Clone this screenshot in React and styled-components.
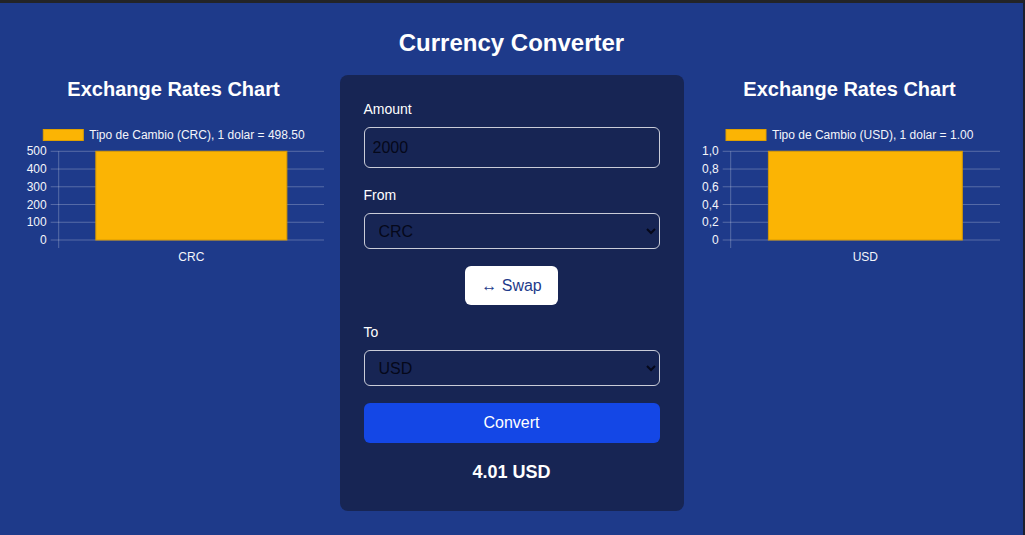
import React from "react";
import styled, { createGlobalStyle } from "styled-components";

const GlobalStyle = createGlobalStyle`
  body {
    margin: 0;
    background-color: #1e3a8a;
    font-family: "Liberation Sans", Arial, sans-serif;
    color: #ffffff;
  }
`

const Page = styled.div`
  min-height: 100vh;
  box-sizing: border-box;
  border-top: 3px solid #232427;
  border-right: 2px solid #1b1f2e;
  padding-top: 26px;
`

const Title = styled.h1`
  margin: 0 0 18px;
  font-size: 24px;
  line-height: 28px;
  font-weight: bold;
  text-align: center;
`

const Row = styled.div`
  display: flex;
  justify-content: center;
  align-items: flex-start;
  gap: 16px;
`

const ChartColumn = styled.section`
  width: 300px;
  display: flex;
  flex-direction: column;
  align-items: center;
`

const ChartTitle = styled.h2`
  margin: 1px 0 17px;
  font-size: 20px;
  line-height: 26px;
  font-weight: bold;
`

const ChartSvg = styled.svg`
  display: block;
  overflow: visible;
  font-family: "Liberation Sans", Arial, sans-serif;
  font-size: 12px;
  fill: #f4f5fa;
`

const Card = styled.div`
  width: 344px;
  box-sizing: border-box;
  padding: 24px 24px 25px;
  background-color: #172554;
  border-radius: 8px;
  display: flex;
  flex-direction: column;
`

const Label = styled.label`
  display: block;
  font-size: 14px;
  line-height: 20px;
  margin-top: ${props => props.$gap || "17px"};
  margin-bottom: 8px;
`

const Input = styled.input`
  box-sizing: border-box;
  width: 100%;
  height: 41px;
  padding: 0 8px;
  font-family: "Liberation Sans", Arial, sans-serif;
  font-size: 16px;
  color: #05081a;
  background: transparent;
  border: 1px solid #c9ccd8;
  border-radius: 6px;
  outline: none;
`

const Select = styled.select`
  box-sizing: border-box;
  width: 100%;
  height: 36px;
  padding: 0 10px;
  font-family: "Liberation Sans", Arial, sans-serif;
  font-size: 16px;
  color: #05081a;
  background: transparent;
  border: 1px solid #c9ccd8;
  border-radius: 6px;
`

const SwapRow = styled.div`
  display: flex;
  justify-content: center;
  margin-top: 17px;
`

const SwapButton = styled.button`
  height: 39px;
  padding: 0 16px;
  font-family: "Liberation Sans", Arial, sans-serif;
  font-size: 16px;
  color: #1e3a8a;
  background: #ffffff;
  border: none;
  border-radius: 6px;
`

const ConvertButton = styled.button`
  margin-top: 17px;
  width: 100%;
  height: 40px;
  font-family: "Liberation Sans", Arial, sans-serif;
  font-size: 16px;
  color: #ffffff;
  background: #1447e6;
  border: none;
  border-radius: 6px;
`

const Result = styled.div`
  margin-top: 15px;
  font-size: 18px;
  line-height: 28px;
  font-weight: bold;
  text-align: center;
`

const GRID = "rgba(255,255,255,0.25)"
const BAR = "#fbb404"

function BarChart({ legend, legendX, ticks, axisX, category }) {
  const top = 32.3
  const bottom = 121
  const step = (bottom - top) / (ticks.length - 1)
  const plotW = 300 - axisX
  const barW = plotW * 0.72
  const center = axisX + plotW / 2
  return (
    <ChartSvg width="300" height="150" viewBox="0 0 300 150">
      <rect x={legendX} y="10.5" width="40" height="11" fill={BAR} stroke="#e0a000" strokeWidth="1" />
      <text x={legendX + 46} y="20">{legend}</text>
      {ticks.map((t, i) => {
        const y = top + i * step
        return (
          <g key={t}>
            <line x1={axisX - 8} x2="300" y1={y} y2={y} stroke={GRID} strokeWidth="1" />
            <text x={axisX - 12} y={y + 4} textAnchor="end">{t}</text>
          </g>
        )
      })}
      <line x1={axisX} x2={axisX} y1={top} y2={bottom + 8} stroke={GRID} strokeWidth="1" />
      <rect x={center - barW / 2} y={top} width={barW} height={bottom - top} fill={BAR} stroke="#d99a00" strokeWidth="1" />
      <text x={center} y="142" textAnchor="middle">{category}</text>
    </ChartSvg>
  )
}

function App() {
  return (
    <Page>
      <GlobalStyle />
      <Title>Currency Converter</Title>
      <Row>
        <ChartColumn>
          <ChartTitle>Exchange Rates Chart</ChartTitle>
          <BarChart
            legend="Tipo de Cambio (CRC), 1 dolar = 498.50"
            legendX={19.3}
            ticks={["500", "400", "300", "200", "100", "0"]}
            axisX={34.7}
            category="CRC"
          />
        </ChartColumn>
        <Card>
          <Label $gap="0">Amount</Label>
          <Input type="number" defaultValue="2000" />
          <Label>From</Label>
          <Select defaultValue="CRC">
            <option value="CRC">CRC</option>
            <option value="USD">USD</option>
            <option value="EUR">EUR</option>
          </Select>
          <SwapRow>
            <SwapButton>↔ Swap</SwapButton>
          </SwapRow>
          <Label>To</Label>
          <Select defaultValue="USD">
            <option value="CRC">CRC</option>
            <option value="USD">USD</option>
            <option value="EUR">EUR</option>
          </Select>
          <ConvertButton>Convert</ConvertButton>
          <Result>4.01 USD</Result>
        </Card>
        <ChartColumn>
          <ChartTitle>Exchange Rates Chart</ChartTitle>
          <BarChart
            legend="Tipo de Cambio (USD), 1 dolar = 1.00"
            legendX={26}
            ticks={["1,0", "0,8", "0,6", "0,4", "0,2", "0"]}
            axisX={30.7}
            category="USD"
          />
        </ChartColumn>
      </Row>
    </Page>
  );
}

export default App;
